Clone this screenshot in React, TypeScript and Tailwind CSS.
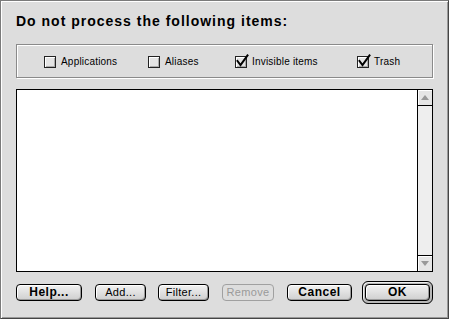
const OPTIONS = [
  { label: "Applications", checked: false, width: "w-[104px]" },
  { label: "Aliases", checked: false, width: "w-[87px]" },
  { label: "Invisible items", checked: true, width: "w-[122px]" },
  { label: "Trash", checked: true, width: "w-[60px]" },
];

function CheckBox({ checked }: { checked: boolean }) {
  return (
    <span className="relative block h-[12px] w-[12px] shrink-0 border border-[#222] bg-[#e4e4e4] shadow-[inset_1px_1px_0_#fff,inset_-1px_-1px_0_#aaa]">
      {checked && (
        <svg className="absolute -left-[1px] -top-[3px] overflow-visible" width="14" height="14" viewBox="0 0 14 14">
          <path d="M2.5 7 L5.5 11 L12.5 1.5" fill="none" stroke="#000" strokeWidth="2" strokeLinecap="square" />
        </svg>
      )}
    </span>
  );
}

function Button({ label, bold, disabled, width }: { label: string; bold?: boolean; disabled?: boolean; width: string }) {
  return (
    <button
      className={`flex h-[17px] items-center justify-center rounded-[4px] border leading-none ${width} ${
        disabled
          ? "border-[#a0a0a0] bg-[#dddddd] text-[#9a9a9a]"
          : "border-black bg-gradient-to-b from-[#f2f2f2] to-[#cfcfcf] text-black shadow-[inset_1px_1px_0_#fff,inset_-1px_-1px_0_#9a9a9a]"
      } ${bold ? "text-[12px] font-bold tracking-[0.5px]" : "text-[11px] tracking-[0.3px]"}`}
    >
      {label}
    </button>
  );
}

export default function App() {
  return (
    <div className="h-[319px] w-[449px] border border-[#7a7a7a] border-b-[#444] border-r-[#444] bg-[#dddddd] font-['Liberation_Sans',Arial,sans-serif] text-black shadow-[inset_1px_1px_0_#fff,inset_-1px_-1px_0_#999]">
      <div className="flex flex-col pl-[15px]">
        <h1 className="mt-[11px] h-[18px] text-[14px] font-bold leading-[18px] tracking-[1px]">
          Do not process the following items:
        </h1>

        <div className="mt-[14px] flex h-[34px] w-[417px] items-center border border-[#8a8a8a] pl-[27px] pt-[2px] shadow-[1px_1px_0_#fff,inset_1px_1px_0_#fff]">
          {OPTIONS.map((o) => (
            <label key={o.label} className={`flex items-center gap-[5px] ${o.width}`}>
              <CheckBox checked={o.checked} />
              <span className="text-[10px] leading-none tracking-[0.2px]">{o.label}</span>
            </label>
          ))}
        </div>

        <div className="mt-[11px] flex h-[183px] w-[417px] border border-black bg-white">
          <div className="flex-1" />
          <div className="flex w-[15px] flex-col border-l border-black bg-[#eeeeee]">
            <div className="flex h-[16px] items-center justify-center border-b border-black bg-[#e6e6e6] shadow-[inset_1px_1px_0_#fff]">
              <svg width="8" height="5" viewBox="0 0 8 5">
                <path d="M4 0 L8 5 L0 5 Z" fill="#999" />
              </svg>
            </div>
            <div className="flex-1" />
            <div className="flex h-[16px] items-center justify-center border-t border-black bg-[#e6e6e6] shadow-[inset_1px_1px_0_#fff]">
              <svg width="8" height="5" viewBox="0 0 8 5">
                <path d="M0 0 L8 0 L4 5 Z" fill="#999" />
              </svg>
            </div>
          </div>
        </div>

        <div className="mt-[8px] flex h-[24px] items-center">
          <Button label="Help..." bold width="w-[66px]" />
          <div className="ml-[13px]">
            <Button label="Add..." width="w-[51px]" />
          </div>
          <div className="ml-[12px]">
            <Button label="Filter..." width="w-[51px]" />
          </div>
          <div className="ml-[13px]">
            <Button label="Remove" disabled width="w-[52px]" />
          </div>
          <div className="ml-[13px]">
            <Button label="Cancel" bold width="w-[65px]" />
          </div>
          <div className="ml-[10px] rounded-[6px] border border-black bg-[#b8b8b8] p-[2px] shadow-[inset_1px_1px_0_#eee]">
            <Button label="OK" bold width="w-[65px]" />
          </div>
        </div>
      </div>
    </div>
  );
}
